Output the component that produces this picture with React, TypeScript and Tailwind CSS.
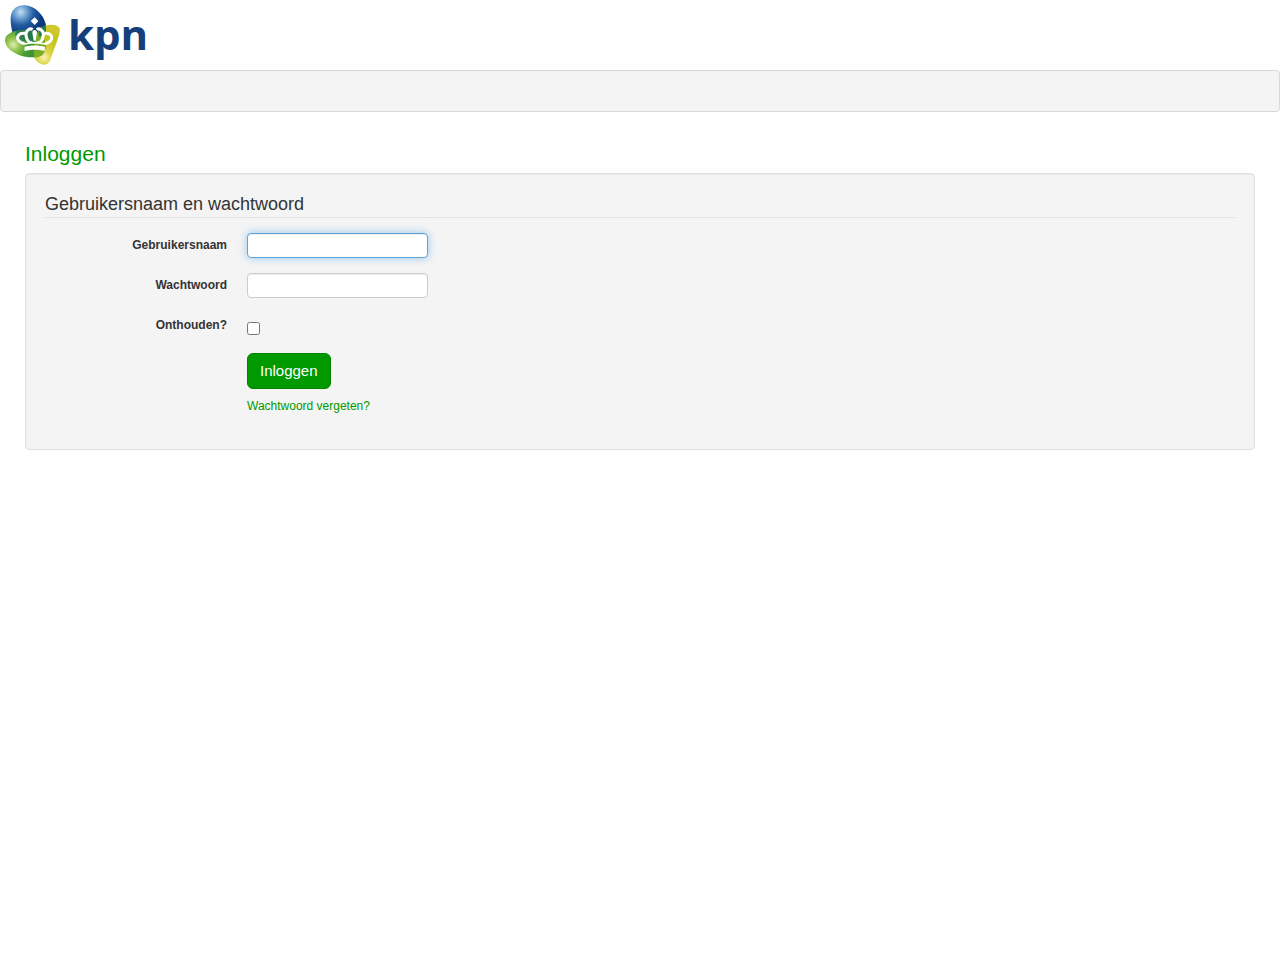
import React, { useState } from 'react';

const inputClass =
  'block h-[25px] w-[181px] rounded border border-[#ccc] bg-white px-1 text-xs text-[#555] shadow-[inset_0_1px_1px_rgba(0,0,0,0.075)] outline-none focus:border-[#62a4d6] focus:shadow-[inset_0_1px_1px_rgba(0,0,0,0.075),0_0_8px_rgba(82,168,236,0.6)]';

const labelClass = 'w-[182px] shrink-0 text-right text-xs leading-6 font-bold';

const KpnMark: React.FC = () => (
  <svg viewBox="0 0 198 210" className="h-[70px] w-[66px] shrink-0" aria-hidden="true">
    <defs>
      <radialGradient id="blue" gradientUnits="userSpaceOnUse" cx="62" cy="36" r="66">
        <stop offset="0" stopColor="#c3def2" />
        <stop offset="0.25" stopColor="#78a9d7" />
        <stop offset="0.6" stopColor="#215ca2" />
        <stop offset="1" stopColor="#0d3a7d" />
      </radialGradient>
      <radialGradient id="green" gradientUnits="userSpaceOnUse" cx="40" cy="134" r="76">
        <stop offset="0" stopColor="#deefb8" />
        <stop offset="0.25" stopColor="#94c64e" />
        <stop offset="0.55" stopColor="#4e9f32" />
        <stop offset="1" stopColor="#2c8a39" />
      </radialGradient>
      <radialGradient id="yellow" gradientUnits="userSpaceOnUse" cx="132" cy="172" r="90">
        <stop offset="0" stopColor="#f8f3b4" />
        <stop offset="0.25" stopColor="#dcd444" />
        <stop offset="0.65" stopColor="#bfc41a" />
        <stop offset="1" stopColor="#d0c92c" />
      </radialGradient>
      <clipPath id="yellowShape">
        <path d="M121 84C138 73 166 70 177 82C184 92 176 110 169 130L151 179C145 194 134 197 121 191C107 184 100 173 101 157C103 135 104 104 121 84Z" />
      </clipPath>
    </defs>
    <path d="M32 62C30 32 47 14 77 16C105 19 130 43 138 74L128 112H46C36 99 33 82 32 62Z" fill="url(#blue)" />
    <path d="M121 84C138 73 166 70 177 82C184 92 176 110 169 130L151 179C145 194 134 197 121 191C107 184 100 173 101 157C103 135 104 104 121 84Z" fill="url(#yellow)" />
    <path d="M15 120C16 104 34 94 62 90C89 86 117 93 129 112C140 129 139 152 126 165C113 175 80 174 55 164C30 154 15 138 15 120Z" fill="url(#green)" />
    <path d="M58 91C87 86 117 93 129 111L124 124H61L45 106L48 93Z" fill="#176a57" opacity="0.65" />
    <g clipPath="url(#yellowShape)">
      <path d="M15 120C16 104 34 94 62 90C89 86 117 93 129 112C140 129 139 152 126 165C113 175 80 174 55 164C30 154 15 138 15 120Z" fill="#7bad26" />
      <path d="M110 60H138V95L118 112Z" fill="#277c58" />
    </g>
    <path d="M104 52L115 63L104 75L92 63Z" fill="#fff" />
    <g fill="none" stroke="#fff">
      <path d="M72 131C58 127 50 118 53 110C56 103 64 99 75 100" strokeWidth="9" />
      <path d="M88 127C76 115 75 98 83 91C88 86 94 86 98 89" strokeWidth="9" />
      <path d="M120 127C132 115 133 98 125 91C120 86 114 86 110 89" strokeWidth="9" />
      <path d="M136 131C150 127 158 118 155 110C152 103 144 99 133 100" strokeWidth="9" />
    </g>
    <path d="M97 98C97 93 100 90 104 90C108 90 111 93 111 98L107 122H101Z" fill="#fff" />
    <path d="M68 127C78 131 88 129 93 122C98 127 110 127 115 122C120 129 130 131 140 127L137 135C119 130 89 130 71 135Z" fill="#fff" />
    <path d="M73 141C91 135 117 135 135 141L134 153C116 148 92 148 74 153Z" fill="#fff" />
  </svg>
);

const App: React.FC = () => {
  const [username, setUsername] = useState('');
  const [password, setPassword] = useState('');
  const [remember, setRemember] = useState(false);

  const handleSubmit = (e: React.FormEvent) => {
    e.preventDefault();
  };

  return (
    <div className="min-h-screen bg-white font-['Liberation_Sans',Arial,sans-serif] text-xs text-[#333]">
      <header className="h-[70px]">
        <a href="#" className="inline-flex items-start gap-0.5" aria-label="kpn">
          <KpnMark />
          <span className="font-['Open_Sans',sans-serif] text-[42px] leading-[68px] font-bold text-[#143f7b]">kpn</span>
        </a>
      </header>

      <nav className="h-[42px] rounded border border-[#d8d8d8] bg-[#f4f4f4]" />

      <main className="px-[25px] pt-7">
        <h1 className="mb-[5px] text-[21px] leading-7 text-[#009900]">Inloggen</h1>

        <form
          onSubmit={handleSubmit}
          className="rounded border border-[#e0e0e0] bg-[#f4f4f4] p-[19px] shadow-[inset_0_1px_1px_rgba(0,0,0,0.05)]"
        >
          <fieldset className="mb-[15px]">
            <legend className="mb-[15px] w-full border-b border-[#e2e2e2] pb-0.5 text-lg leading-[22px]">
              Gebruikersnaam en wachtwoord
            </legend>

            <div className="mb-[15px] flex h-[25px] gap-5">
              <label htmlFor="username" className={labelClass}>Gebruikersnaam</label>
              <input
                id="username"
                type="text"
                autoFocus
                value={username}
                onChange={(e) => setUsername(e.target.value)}
                className={inputClass}
              />
            </div>

            <div className="mb-[15px] flex h-[25px] gap-5">
              <label htmlFor="password" className={labelClass}>Wachtwoord</label>
              <input
                id="password"
                type="password"
                value={password}
                onChange={(e) => setPassword(e.target.value)}
                className={inputClass}
              />
            </div>

            <div className="mb-[15px] flex h-[25px] gap-5">
              <label htmlFor="remember" className={labelClass}>Onthouden?</label>
              <input
                id="remember"
                type="checkbox"
                checked={remember}
                onChange={(e) => setRemember(e.target.checked)}
                className="mt-[9px] size-[13px]"
              />
            </div>

            <div className="flex flex-col items-start gap-2 pl-[202px]">
              <button
                type="submit"
                className="h-9 rounded-md border border-[#008500] bg-[#009900] px-3 text-[15px] text-white hover:bg-[#008500]"
              >
                Inloggen
              </button>
              <a href="#" className="leading-[18px] text-[#009900] hover:underline">Wachtwoord vergeten?</a>
            </div>
          </fieldset>
        </form>
      </main>
    </div>
  );
};

export default App;
